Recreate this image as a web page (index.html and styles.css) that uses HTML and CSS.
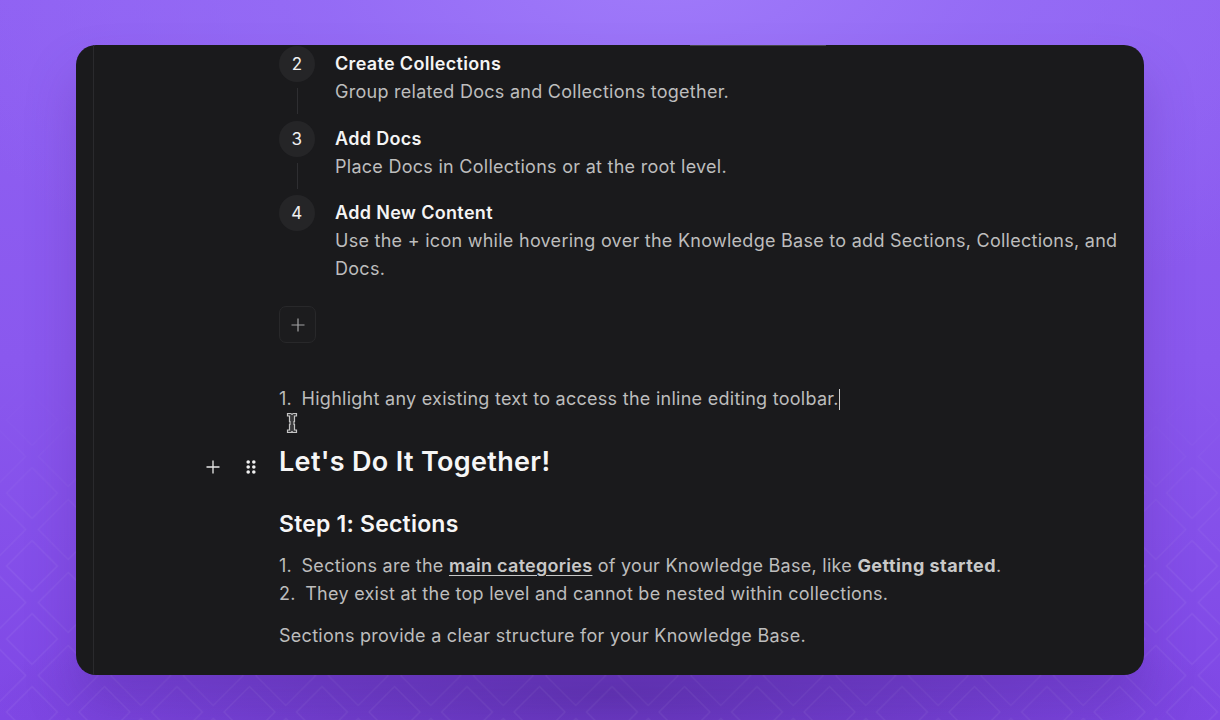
FILE: index.html
```html
<!DOCTYPE html>
<html lang="en">
<head>
    <meta charset="UTF-8">
    <meta name="viewport" content="width=device-width, initial-scale=1.0">
    <title>Knowledge Base Editor</title>
    <link rel="stylesheet" href="styles.css">
</head>
<body>
    <!-- Diamond pattern behind the card -->
    <svg class="bg-pattern" width="1220" height="720" aria-hidden="true">
        <defs>
            <pattern id="diamonds" x="-4.25" y="18.5" width="72.5" height="73" patternUnits="userSpaceOnUse">
                <g fill="none" stroke="#fff" stroke-opacity="0.075" stroke-width="1.2">
                    <path d="M36.25 11 L61.75 36.5 L36.25 62 L10.75 36.5 Z"/>
                    <path d="M0 -30 L30 0 L0 30 L-30 0 Z"/>
                    <path d="M72.5 -30 L102.5 0 L72.5 30 L42.5 0 Z"/>
                    <path d="M0 43 L30 73 L0 103 L-30 73 Z"/>
                    <path d="M72.5 43 L102.5 73 L72.5 103 L42.5 73 Z"/>
                </g>
            </pattern>
            <linearGradient id="fade" x1="0" y1="0" x2="0" y2="1">
                <stop offset="0.5" stop-color="#fff" stop-opacity="0"/>
                <stop offset="0.8" stop-color="#fff" stop-opacity="1"/>
            </linearGradient>
            <mask id="fadeMask">
                <rect width="1220" height="720" fill="url(#fade)"/>
            </mask>
        </defs>
        <rect width="1220" height="720" fill="url(#diamonds)" mask="url(#fadeMask)"/>
    </svg>

    <main class="editor-card">
        <div class="top-strip"></div>
        <div class="editor-gutter"></div>
        <div class="doc">
            <div class="steps">
                <div class="step">
                    <div class="step-marker">
                        <span class="step-num">2</span>
                        <span class="step-line"></span>
                    </div>
                    <div class="step-body">
                        <h4>Create Collections</h4>
                        <p>Group related Docs and Collections together.</p>
                    </div>
                </div>
                <div class="step">
                    <div class="step-marker">
                        <span class="step-num">3</span>
                        <span class="step-line"></span>
                    </div>
                    <div class="step-body">
                        <h4>Add Docs</h4>
                        <p>Place Docs in Collections or at the root level.</p>
                    </div>
                </div>
                <div class="step">
                    <div class="step-marker">
                        <span class="step-num">4</span>
                    </div>
                    <div class="step-body">
                        <h4>Add New Content</h4>
                        <p>Use the + icon while hovering over the Knowledge Base to add Sections, Collections, and Docs.</p>
                    </div>
                </div>
            </div>

            <button class="add-step" aria-label="Add step">
                <svg width="16" height="16" viewBox="0 0 16 16"><path d="M8 1.5 V14.5 M1.5 8 H14.5" stroke="#a2a2a4" stroke-width="1.2" fill="none"/></svg>
            </button>

            <div class="list-line highlight-line">
                <span class="num">1.</span>Highlight any existing text to access the inline editing toolbar.<span class="caret"></span>
                <svg class="ibeam" width="12" height="22" viewBox="0 0 12 22" aria-hidden="true">
                    <path d="M1.5 1.5 H4.5 Q6 1.5 6 3 Q6 1.5 7.5 1.5 H10.5 V4 H8.5 V9.5 H8 V12.5 H8.5 V18 H10.5 V20.5 H7.5 Q6 20.5 6 19 Q6 20.5 4.5 20.5 H1.5 V18 H3.5 V12.5 H4 V9.5 H3.5 V4 H1.5 Z" fill="#3a3a3c" stroke="#c4c4c4" stroke-width="1.2"/>
                </svg>
            </div>

            <div class="heading-row">
                <div class="block-tools">
                    <svg width="14" height="14" viewBox="0 0 14 14"><path d="M7 0.5 V13.5 M0.5 7 H13.5" stroke="#e8e8e8" stroke-width="1.3" fill="none"/></svg>
                    <svg width="10" height="14" viewBox="0 0 10 14" fill="#f0f0f0">
                        <circle cx="2.2" cy="2" r="1.8"/><circle cx="7.8" cy="2" r="1.8"/>
                        <circle cx="2.2" cy="7" r="1.8"/><circle cx="7.8" cy="7" r="1.8"/>
                        <circle cx="2.2" cy="12" r="1.8"/><circle cx="7.8" cy="12" r="1.8"/>
                    </svg>
                </div>
                <h1>Let's Do It Together!</h1>
            </div>

            <h2>Step 1: Sections</h2>

            <div class="list-line">
                <span class="num">1.</span>Sections are the <a class="doc-link" href="#">main categories</a> of your Knowledge Base, like <strong>Getting started</strong>.
            </div>
            <div class="list-line">
                <span class="num">2.</span>They exist at the top level and cannot be nested within collections.
            </div>

            <p class="doc-para">Sections provide a clear structure for your Knowledge Base.</p>
        </div>
    </main>
</body>
</html>
```

FILE: styles.css
```css
* {
    box-sizing: border-box;
}

html, body {
    margin: 0;
    height: 720px;
    overflow: hidden;
}

body {
    position: relative;
    padding: 45px 76px;
    font-family: Inter, "Liberation Sans", sans-serif;
    font-size: 18px;
    line-height: 28px;
    letter-spacing: 0.27px;
    color: #bdbdbd;
    background-color: #8450ea;
    background-image:
        radial-gradient(ellipse 620px 110px at 610px 695px, rgba(80, 40, 150, 0.6), rgba(80, 40, 150, 0)),
        radial-gradient(ellipse 760px 420px at 660px -40px, #a07bfa 0%, rgba(150, 110, 246, 0.8) 45%, rgba(140, 90, 240, 0) 100%),
        linear-gradient(180deg, #8f60f2 0%, #8a58ee 50%, #7f47e5 100%);
}

.bg-pattern {
    position: absolute;
    top: 0;
    left: 0;
}

.editor-card {
    position: relative;
    display: flex;
    width: 1068px;
    height: 630px;
    overflow: hidden;
    background-color: #1a1a1c;
    border-radius: 20px;
    box-shadow: 0 30px 50px rgba(70, 30, 140, 0.25);
}

.top-strip {
    position: absolute;
    top: 0;
    left: 614px;
    width: 136px;
    height: 1px;
    background-color: #46464a;
}

.editor-gutter {
    flex: none;
    width: 18px;
    border-right: 1px solid #2a2a2d;
}

.doc {
    flex: 1;
    padding: 1px 18px 0 185px;
}

.step {
    display: flex;
    gap: 20px;
    min-height: 74.5px;
}

.step-marker {
    display: flex;
    flex-direction: column;
    align-items: center;
    flex: none;
    width: 36px;
}

.step-num {
    flex: none;
    width: 36px;
    height: 36px;
    display: flex;
    align-items: center;
    justify-content: center;
    border-radius: 50%;
    background-color: #252527;
    color: #f0f0f0;
    font-size: 17px;
    font-weight: 400;
}

.step-line {
    width: 1px;
    height: 26px;
    margin-top: 6px;
    background-color: #2e2e31;
}

.step-body h4 {
    margin: 4px 0 0;
    font-size: 18px;
    line-height: 28px;
    letter-spacing: 0.33px;
    font-weight: 600;
    color: #f4f4f4;
}

.step-body p {
    margin: 0;
}

.add-step {
    display: flex;
    align-items: center;
    justify-content: center;
    width: 37px;
    height: 37px;
    margin-top: 23px;
    padding: 0;
    background-color: #1c1c1e;
    border: 1px solid #28282a;
    border-radius: 7px;
}

.list-line {
    height: 28px;
}

.num {
    margin-right: 9.5px;
}

.highlight-line {
    position: relative;
    margin-top: 42px;
}

.caret {
    display: inline-block;
    width: 1px;
    height: 21px;
    vertical-align: -5px;
    background-color: #d0d0d0;
}

.ibeam {
    position: absolute;
    left: 7px;
    top: 27px;
}

.heading-row {
    position: relative;
    margin-top: 31px;
}

.block-tools {
    position: absolute;
    left: -73px;
    top: 16px;
    display: flex;
    align-items: center;
    gap: 26px;
}

h1 {
    margin: 0;
    font-size: 27px;
    line-height: 36px;
    letter-spacing: 0.33px;
    font-weight: 600;
    color: #f6f6f6;
}

h2 {
    margin: 28px 0 12px;
    font-size: 23px;
    line-height: 32px;
    letter-spacing: 0.2px;
    font-weight: 600;
    color: #f6f6f6;
}

.doc-link {
    color: #c8c8c8;
    font-weight: 600;
    text-decoration: underline;
    text-underline-offset: 3px;
}

strong {
    font-weight: 700;
    letter-spacing: 0.45px;
    color: #c8c8c8;
}

.doc-para {
    margin: 14px 0 0;
}
```
